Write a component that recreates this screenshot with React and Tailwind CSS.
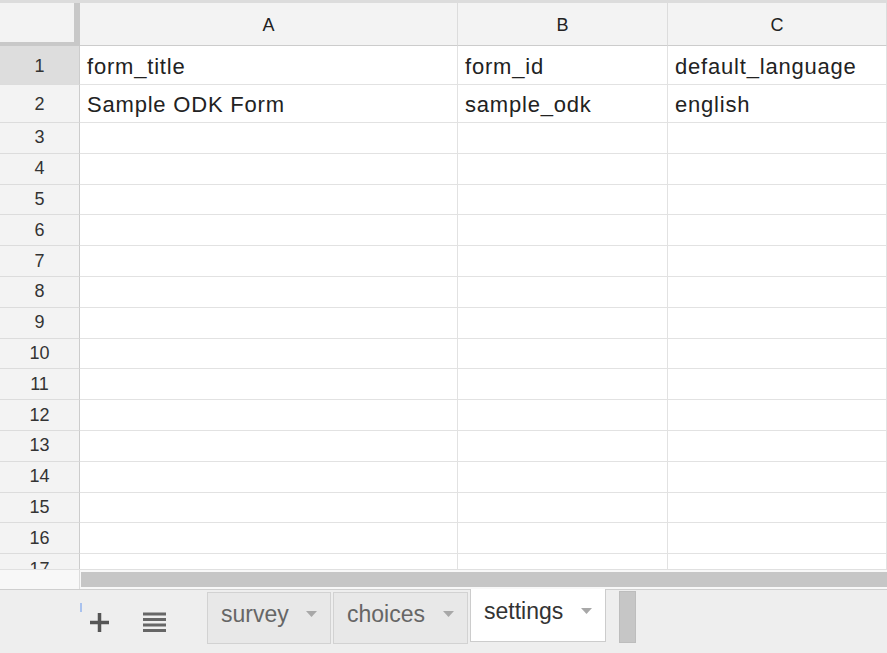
import React from 'react';

const cols = [
  { label: 'A', w: 'w-[378px]' },
  { label: 'B', w: 'w-[210px]' },
  { label: 'C', w: 'flex-1' },
];

const data = {
  1: ['form_title', 'form_id', 'default_language'],
  2: ['Sample ODK Form', 'sample_odk', 'english'],
};

const rows = Array.from({ length: 17 }, (_, i) => i + 1);

const tabs = [
  { name: 'survey', w: 'w-[124px]' },
  { name: 'choices', w: 'w-[135px]' },
  { name: 'settings', w: 'w-[136px]', active: true },
];

const rowPad = { 1: 'pt-[4px]', 2: 'pt-[2px]' };

const Arrow = () => (
  <svg width="11" height="7" viewBox="0 0 11 7" className="ml-auto">
    <path d="M0 0 L11 0 L5.5 6 Z" fill="#a8a8a8" />
  </svg>
);

export default function App() {
  return (
    <div
      className="w-[887px] h-[653px] bg-white overflow-hidden flex flex-col"
      style={{ fontFamily: '"Liberation Sans", Arial, sans-serif' }}
    >
      {/* grid */}
      <div className="h-[569px] overflow-hidden border-t-[3px] border-[#dcdcdc]">
        <div className="flex h-[43px]">
          <div className="w-[80px] bg-[#f3f3f3] border-r-[6px] border-b-[4px] border-[#c8c8c8]" />
          {cols.map((c) => (
            <div
              key={c.label}
              className={`${c.w} bg-[#f3f3f3] border-r border-b border-r-[#dcdcdc] border-b-[#cccccc] flex items-center justify-center pt-[2px] text-[18px] text-[#222]`}
            >
              {c.label}
            </div>
          ))}
        </div>

        {rows.map((r) => (
          <div key={r} className={`flex ${r <= 2 ? 'h-[38.5px]' : 'h-[30.8px]'}`}>
            <div
              className={`w-[80px] shrink-0 border-r border-b border-r-[#cccccc] border-b-[#dcdcdc] flex items-center justify-center text-[18px] text-[#333] ${
                rowPad[r] || ''
              } ${r === 1 ? 'bg-[#dddddd]' : 'bg-[#f3f3f3]'}`}
            >
              {r}
            </div>
            {cols.map((c, ci) => (
              <div
                key={c.label}
                className={`${c.w} border-r border-b border-[#e2e2e2] flex items-center pl-[7px] ${
                  rowPad[r] || ''
                } text-[22px] tracking-[0.8px] text-[#222] whitespace-nowrap overflow-hidden`}
              >
                {data[r] ? data[r][ci] : ''}
              </div>
            ))}
          </div>
        ))}
      </div>

      {/* horizontal scrollbar */}
      <div className="h-[21px] flex border-t border-[#e0e0e0] border-b border-b-[#cfcfcf] bg-[#f8f8f8]">
        <div className="w-[80px] border-r border-[#dcdcdc]" />
        <div className="flex-1 pl-[1px] py-[2px]">
          <div className="h-full bg-[#c6c6c6]" />
        </div>
      </div>

      {/* sheet bar */}
      <div className="flex-1 bg-[#eeeeee] relative flex">
        <div className="absolute left-[80px] top-[13px] w-[2px] h-[9px] bg-[#a9c2ee]" />
        <div className="w-[207px] flex items-center pl-[89px] gap-[33px] pt-[1px]">
          <svg width="21" height="21" viewBox="0 0 21 21">
            <path d="M10.5 1 V20 M1 10.5 H20" stroke="#555" strokeWidth="3.5" />
          </svg>
          <svg width="23" height="21" viewBox="0 0 23 21">
            <path d="M0 2 H23 M0 7.5 H23 M0 13 H23 M0 18.5 H23" stroke="#666" strokeWidth="3" />
          </svg>
        </div>
        <div className="flex gap-[2px] items-start">
          {tabs.map((t) =>
            t.active ? (
              <div
                key={t.name}
                className={`${t.w} h-[53px] -mt-[1px] bg-white border border-t-0 border-[#cccccc] flex items-center px-[13px] pb-[7px] text-[23px] text-[#333]`}
              >
                <span>{t.name}</span>
                <Arrow />
              </div>
            ) : (
              <div
                key={t.name}
                className={`${t.w} h-[52px] mt-[2px] bg-[#e8e8e8] border border-[#d2d2d2] flex items-center px-[13px] pb-[8px] text-[23px] text-[#666]`}
              >
                <span>{t.name}</span>
                <Arrow />
              </div>
            )
          )}
          <div className="ml-[11px] mt-[1px] w-[17px] h-[52px] bg-[#c6c6c6] border border-[#bdbdbd]" />
        </div>
      </div>
    </div>
  );
}
